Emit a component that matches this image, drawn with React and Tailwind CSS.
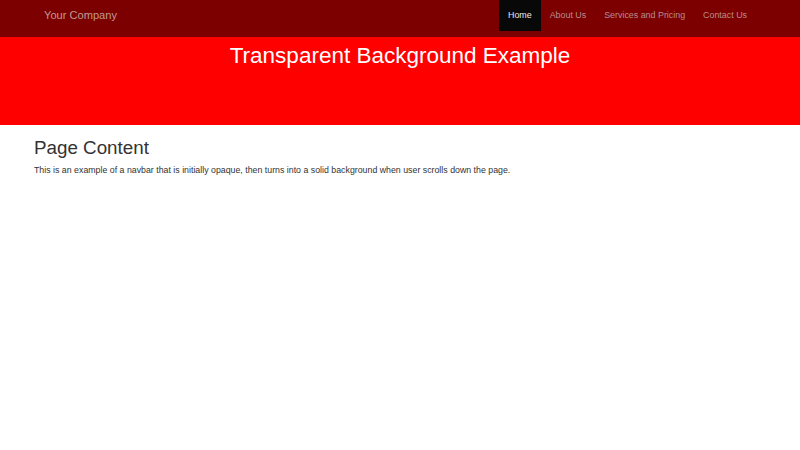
import React from 'react';

const LINKS = ['Home', 'About Us', 'Services and Pricing', 'Contact Us'];

export default function App() {
  return (
    <div className="min-h-[450px] bg-white font-['Liberation_Sans',Arial,sans-serif] text-[#333]">
      {/* Navbar */}
      <nav className="h-[37px] bg-[#7c0000]">
        <div className="flex items-start justify-between pl-[44px] pr-[44px]">
          <a className="mt-[8px] text-[11.1px] leading-[15px] text-[#bd9a9a]">Your Company</a>
          <ul className="flex">
            {LINKS.map((l, i) => (
              <li key={l}>
                <a
                  className={`block h-[31px] px-[9px] text-[8.9px] leading-[31px] ${
                    i === 0 ? 'bg-[#080808] text-[#e8e8e8]' : 'text-[#b88e8e]'
                  }`}
                >
                  {l}
                </a>
              </li>
            ))}
          </ul>
        </div>
      </nav>

      {/* Header band */}
      <header className="h-[88px] bg-[#ff0000] pt-[6px] text-center">
        <h1 className="text-[22.5px] leading-[26px] text-white">Transparent Background Example</h1>
      </header>

      {/* Content */}
      <main className="px-[34px] pt-[12px]">
        <h2 className="text-[18.8px] leading-[22px]">Page Content</h2>
        <p className="mt-[5px] text-[8.8px] leading-[12px]">
          This is an example of a navbar that is initially opaque, then turns into a solid background when user scrolls down the page.
        </p>
      </main>
    </div>
  );
}
